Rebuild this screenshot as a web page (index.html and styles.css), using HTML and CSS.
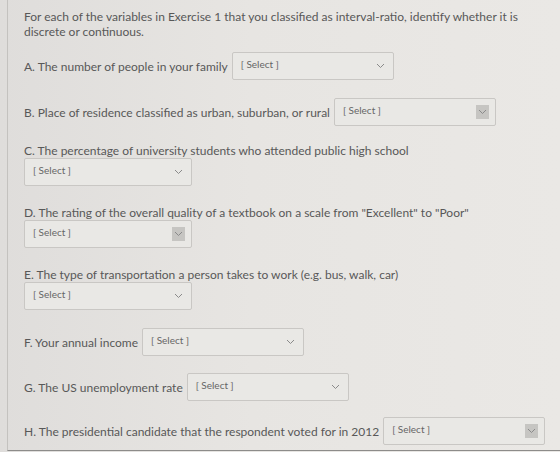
FILE: index.html
```html
<!DOCTYPE html>
<html lang="en">
<head>
  <meta charset="UTF-8">
  <link rel="stylesheet" href="styles.css">
  <title>Quiz Question</title>
</head>
<body>
  <div class="quiz">
    <p class="intro">For each of the variables in Exercise 1 that you classified as interval-ratio, identify whether it is discrete or continuous.</p>

    <div class="row inline q-a">
      <span class="label">A. The number of people in your family</span>
      <div class="select"><span>[ Select ]</span><span class="arrow"><svg width="9" height="6" viewBox="0 0 9 6"><path d="M1 1l3.5 3.5L8 1" fill="none" stroke="#8a8a8a" stroke-width="1"/></svg></span></div>
    </div>

    <div class="row inline q-b">
      <span class="label">B. Place of residence classified as urban, suburban, or rural</span>
      <div class="select"><span>[ Select ]</span><span class="arrow boxed"><svg width="9" height="6" viewBox="0 0 9 6"><path d="M1 1l3.5 3.5L8 1" fill="none" stroke="#8a8a8a" stroke-width="1"/></svg></span></div>
    </div>

    <div class="row stacked q-c">
      <span class="label">C. The percentage of university students who attended public high school</span>
      <div class="select"><span>[ Select ]</span><span class="arrow"><svg width="9" height="6" viewBox="0 0 9 6"><path d="M1 1l3.5 3.5L8 1" fill="none" stroke="#8a8a8a" stroke-width="1"/></svg></span></div>
    </div>

    <div class="row stacked q-d">
      <span class="label">D. The rating of the overall quality of a textbook on a scale from "Excellent" to "Poor"</span>
      <div class="select"><span>[ Select ]</span><span class="arrow boxed"><svg width="9" height="6" viewBox="0 0 9 6"><path d="M1 1l3.5 3.5L8 1" fill="none" stroke="#8a8a8a" stroke-width="1"/></svg></span></div>
    </div>

    <div class="row stacked q-e">
      <span class="label">E. The type of transportation a person takes to work (e.g. bus, walk, car)</span>
      <div class="select"><span>[ Select ]</span><span class="arrow"><svg width="9" height="6" viewBox="0 0 9 6"><path d="M1 1l3.5 3.5L8 1" fill="none" stroke="#8a8a8a" stroke-width="1"/></svg></span></div>
    </div>

    <div class="row inline q-f">
      <span class="label">F. Your annual income</span>
      <div class="select"><span>[ Select ]</span><span class="arrow"><svg width="9" height="6" viewBox="0 0 9 6"><path d="M1 1l3.5 3.5L8 1" fill="none" stroke="#8a8a8a" stroke-width="1"/></svg></span></div>
    </div>

    <div class="row inline q-g">
      <span class="label">G. The US unemployment rate</span>
      <div class="select"><span>[ Select ]</span><span class="arrow"><svg width="9" height="6" viewBox="0 0 9 6"><path d="M1 1l3.5 3.5L8 1" fill="none" stroke="#8a8a8a" stroke-width="1"/></svg></span></div>
    </div>

    <div class="row inline q-h">
      <span class="label">H. The presidential candidate that the respondent voted for in 2012</span>
      <div class="select"><span>[ Select ]</span><span class="arrow boxed"><svg width="9" height="6" viewBox="0 0 9 6"><path d="M1 1l3.5 3.5L8 1" fill="none" stroke="#8a8a8a" stroke-width="1"/></svg></span></div>
    </div>
  </div>
</body>
</html>
```

FILE: styles.css
```css
html, body {
  margin: 0;
  padding: 0;
}

body {
  font-family: Lato, "Open Sans", sans-serif;
  background: linear-gradient(90deg, #dfdddb 0%, #e7e5e2 45%, #eae8e5 100%);
  color: #585858;
  width: 560px;
  height: 452px;
  overflow: hidden;
}

.quiz {
  margin-left: 7px;
  height: 451px;
  border-left: 1px solid #c4c2bf;
  border-bottom: 1px solid #8d8c8a;
  padding: 9px 0 0 16px;
  box-sizing: border-box;
  overflow: hidden;
}

.intro {
  margin: 0;
  font-size: 12px;
  line-height: 15px;
  width: 510px;
}

.row {
  display: flex;
}

.row.inline {
  align-items: flex-end;
}

.row.stacked {
  flex-direction: column;
  align-items: flex-start;
}

.label {
  font-size: 12px;
  line-height: 14px;
  white-space: nowrap;
}

.row.inline .label {
  padding-bottom: 6px;
  margin-right: 4px;
}

.select {
  width: 162px;
  height: 28px;
  box-sizing: border-box;
  border: 1px solid #c9c7c4;
  border-radius: 2px;
  background: #e9e8e5;
  display: flex;
  align-items: center;
  justify-content: space-between;
  padding: 0 6px 0 8px;
  font-size: 10px;
  color: #666;
}

.row.stacked .select {
  width: 168px;
}

.select span:first-child {
  margin-top: -4px;
}

.arrow {
  width: 13px;
  height: 14px;
  display: flex;
  align-items: center;
  justify-content: center;
}

.arrow.boxed {
  background: #c6c5c2;
}

.q-a { margin-top: 13px; }
.q-b { margin-top: 18px; }
.q-c { margin-top: 18px; }
.q-d { margin-top: 20px; }
.q-e { margin-top: 20px; }
.q-f { margin-top: 18px; }
.q-g { margin-top: 17px; }
.q-h { margin-top: 16px; }
```
